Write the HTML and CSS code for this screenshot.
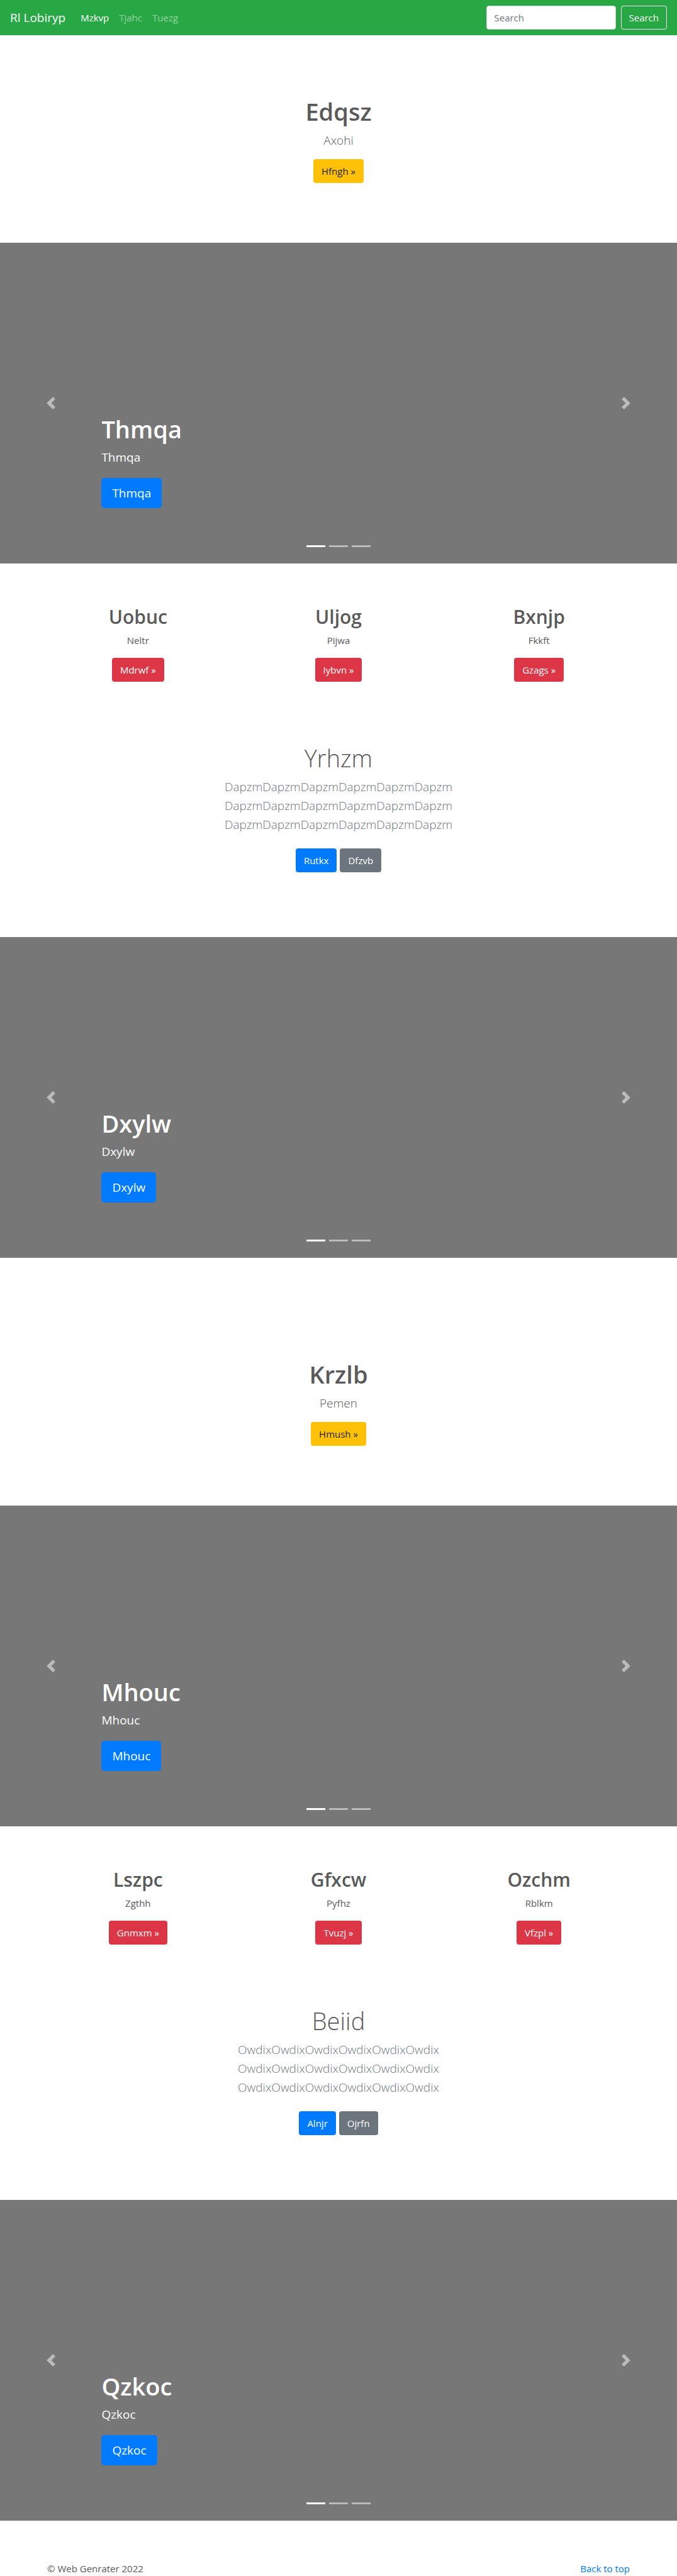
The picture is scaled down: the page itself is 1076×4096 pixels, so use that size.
FILE: index.html
```html
<!DOCTYPE html>
<html lang="en">
<head>
<meta charset="utf-8">
<meta name="viewport" content="width=device-width, initial-scale=1">
<title>Rl Lobiryp</title>
<link rel="stylesheet" href="styles.css">
</head>
<body>
<svg class="sprite" aria-hidden="true">
  <symbol id="chevron-left" viewBox="0 0 8 8"><path d="M5.25 0l-4 4 4 4 1.5-1.5L4.25 4l2.5-2.5L5.25 0z"/></symbol>
  <symbol id="chevron-right" viewBox="0 0 8 8"><path d="M2.75 0l-1.5 1.5L3.75 4l-2.5 2.5L2.75 8l4-4-4-4z"/></symbol>
</svg>

<header class="navbar" id="top">
  <a class="brand" href="#">Rl Lobiryp</a>
  <nav class="nav">
    <a class="nav-link active" href="#">Mzkvp</a>
    <a class="nav-link" href="#">Tjahc</a>
    <a class="nav-link" href="#">Tuezg</a>
  </nav>
  <form class="search">
    <input class="search-input" type="search" placeholder="Search" aria-label="Search">
    <button class="btn btn-outline" type="submit">Search</button>
  </form>
</header>

<main>
  <section class="hero">
    <h1 class="title">Edqsz</h1>
    <p class="lead">Axohi</p>
    <a class="btn btn-warning" href="#">Hfngh »</a>
  </section>

  <section class="carousel">
    <button class="control" type="button" aria-label="Previous"><svg class="chevron"><use href="#chevron-left"/></svg></button>
    <div class="caption">
      <h2 class="title">Thmqa</h2>
      <p class="caption-text">Thmqa</p>
      <a class="btn btn-primary btn-lg" href="#">Thmqa</a>
    </div>
    <button class="control" type="button" aria-label="Next"><svg class="chevron"><use href="#chevron-right"/></svg></button>
    <div class="indicators">
      <button class="indicator current" type="button" aria-label="Slide 1"></button>
      <button class="indicator" type="button" aria-label="Slide 2"></button>
      <button class="indicator" type="button" aria-label="Slide 3"></button>
    </div>
  </section>

  <section class="features">
    <div class="columns">
      <div class="column">
        <h2 class="subtitle">Uobuc</h2>
        <p class="text">Neltr</p>
        <a class="btn btn-danger" href="#">Mdrwf »</a>
      </div>
      <div class="column">
        <h2 class="subtitle">Uljog</h2>
        <p class="text">Pijwa</p>
        <a class="btn btn-danger" href="#">Iybvn »</a>
      </div>
      <div class="column">
        <h2 class="subtitle">Bxnjp</h2>
        <p class="text">Fkkft</p>
        <a class="btn btn-danger" href="#">Gzags »</a>
      </div>
    </div>
    <div class="intro">
      <h2 class="title title-light">Yrhzm</h2>
      <p class="lead lead-muted">DapzmDapzmDapzmDapzmDapzmDapzm<br>DapzmDapzmDapzmDapzmDapzmDapzm<br>DapzmDapzmDapzmDapzmDapzmDapzm</p>
      <div class="actions">
        <a class="btn btn-primary" href="#">Rutkx</a>
        <a class="btn btn-secondary" href="#">Dfzvb</a>
      </div>
    </div>
  </section>

  <section class="carousel">
    <button class="control" type="button" aria-label="Previous"><svg class="chevron"><use href="#chevron-left"/></svg></button>
    <div class="caption">
      <h2 class="title">Dxylw</h2>
      <p class="caption-text">Dxylw</p>
      <a class="btn btn-primary btn-lg" href="#">Dxylw</a>
    </div>
    <button class="control" type="button" aria-label="Next"><svg class="chevron"><use href="#chevron-right"/></svg></button>
    <div class="indicators">
      <button class="indicator current" type="button" aria-label="Slide 1"></button>
      <button class="indicator" type="button" aria-label="Slide 2"></button>
      <button class="indicator" type="button" aria-label="Slide 3"></button>
    </div>
  </section>

  <section class="hero hero-tall">
    <h1 class="title">Krzlb</h1>
    <p class="lead">Pemen</p>
    <a class="btn btn-warning" href="#">Hmush »</a>
  </section>

  <section class="carousel">
    <button class="control" type="button" aria-label="Previous"><svg class="chevron"><use href="#chevron-left"/></svg></button>
    <div class="caption">
      <h2 class="title">Mhouc</h2>
      <p class="caption-text">Mhouc</p>
      <a class="btn btn-primary btn-lg" href="#">Mhouc</a>
    </div>
    <button class="control" type="button" aria-label="Next"><svg class="chevron"><use href="#chevron-right"/></svg></button>
    <div class="indicators">
      <button class="indicator current" type="button" aria-label="Slide 1"></button>
      <button class="indicator" type="button" aria-label="Slide 2"></button>
      <button class="indicator" type="button" aria-label="Slide 3"></button>
    </div>
  </section>

  <section class="features">
    <div class="columns">
      <div class="column">
        <h2 class="subtitle">Lszpc</h2>
        <p class="text">Zgthh</p>
        <a class="btn btn-danger" href="#">Gnmxm »</a>
      </div>
      <div class="column">
        <h2 class="subtitle">Gfxcw</h2>
        <p class="text">Pyfhz</p>
        <a class="btn btn-danger" href="#">Tvuzj »</a>
      </div>
      <div class="column">
        <h2 class="subtitle">Ozchm</h2>
        <p class="text">Rblkm</p>
        <a class="btn btn-danger" href="#">Vfzpl »</a>
      </div>
    </div>
    <div class="intro">
      <h2 class="title title-light">Beiid</h2>
      <p class="lead lead-muted">OwdixOwdixOwdixOwdixOwdixOwdix<br>OwdixOwdixOwdixOwdixOwdixOwdix<br>OwdixOwdixOwdixOwdixOwdixOwdix</p>
      <div class="actions">
        <a class="btn btn-primary" href="#">Alnjr</a>
        <a class="btn btn-secondary" href="#">Ojrfn</a>
      </div>
    </div>
  </section>

  <section class="carousel">
    <button class="control" type="button" aria-label="Previous"><svg class="chevron"><use href="#chevron-left"/></svg></button>
    <div class="caption">
      <h2 class="title">Qzkoc</h2>
      <p class="caption-text">Qzkoc</p>
      <a class="btn btn-primary btn-lg" href="#">Qzkoc</a>
    </div>
    <button class="control" type="button" aria-label="Next"><svg class="chevron"><use href="#chevron-right"/></svg></button>
    <div class="indicators">
      <button class="indicator current" type="button" aria-label="Slide 1"></button>
      <button class="indicator" type="button" aria-label="Slide 2"></button>
      <button class="indicator" type="button" aria-label="Slide 3"></button>
    </div>
  </section>
</main>

<footer class="footer">
  <span>© Web Genrater 2022</span>
  <a class="top-link" href="#top">Back to top</a>
</footer>
</body>
</html>
```
FILE: styles.css
```css
*, *::before, *::after { box-sizing: border-box; }

body {
  margin: 0;
  background: #fff;
  color: #5a5a5a;
  font-family: "Open Sans", "Noto Sans", sans-serif;
  font-size: 15px;
  line-height: 24px;
}

h1, h2, p { margin: 0; }
a { color: inherit; text-decoration: none; }
button, input { font: inherit; }
.sprite { display: none; }

/* Top bar */
.navbar {
  display: flex;
  align-items: center;
  padding: 9px 16px;
  background: #28a745;
  color: #fff;
}
.brand { font-size: 19px; line-height: 30px; margin-right: 16px; }
.nav { display: flex; flex: 1; }
.nav-link { padding: 7px 8px; color: rgba(255, 255, 255, .5); }
.nav-link.active { color: #fff; }
.search { display: flex; gap: 8px; }
.search-input {
  width: 206px;
  height: 38px;
  padding: 6px 12px;
  border: 1px solid #ced4da;
  border-radius: 4px;
  background: #fff;
  color: #495057;
  appearance: none;
}
.search-input::placeholder { color: #6c757d; opacity: 1; }

/* Buttons */
.btn {
  display: inline-block;
  padding: 6px 12px;
  border: 1px solid transparent;
  border-radius: 4px;
  color: #fff;
  line-height: 24px;
  cursor: pointer;
}
.btn-lg { padding: 8px 16px; border-radius: 5px; font-size: 19px; line-height: 30px; }
.btn-outline { background: transparent; border-color: #f8f9fa; color: #f8f9fa; }
.btn-warning { background: #ffc107; color: #212529; }
.btn-primary { background: #007bff; }
.btn-secondary { background: #6c757d; }
.btn-danger { background: #dc3545; }

/* Type */
.title { margin-bottom: 5px; font-size: 38px; font-weight: 600; line-height: 52px; }
.title-light { font-weight: 300; }
.subtitle { margin-bottom: 4px; font-size: 30px; font-weight: 600; line-height: 42px; }
.lead { margin-bottom: 15px; font-size: 19px; font-weight: 300; line-height: 30px; }
.lead-muted { margin-bottom: 23px; color: #6c757d; }
.text { margin-bottom: 16px; }

/* Centred banner */
.hero {
  display: flex;
  flex-direction: column;
  align-items: center;
  padding: 95px 16px;
}
.hero-tall { padding-top: 159px; }

/* Carousel */
.carousel {
  position: relative;
  display: flex;
  min-height: 510px;
  background: #777;
  color: #fff;
}
.control {
  display: flex;
  flex: 0 0 15%;
  align-items: center;
  justify-content: center;
  padding: 0;
  border: 0;
  background: none;
  color: #fff;
  opacity: .5;
  cursor: pointer;
}
.chevron { width: 20px; height: 20px; fill: currentColor; }
.caption { flex: 1; align-self: flex-end; padding-bottom: 88px; }
.caption .btn { display: inline-flex; }
.caption-text { margin-bottom: 19px; font-size: 19px; line-height: 28px; }
.indicators {
  position: absolute;
  right: 0;
  bottom: 26px;
  left: 0;
  display: flex;
  justify-content: center;
  gap: 6px;
}
.indicator {
  width: 30px;
  height: 3px;
  padding: 0;
  border: 0;
  background: #fff;
  opacity: .5;
  cursor: pointer;
}
.indicator.current { opacity: 1; }

/* Three columns and the intro below */
.features { padding: 64px 0 103px; text-align: center; }
.columns {
  display: grid;
  grid-template-columns: repeat(3, 1fr);
  max-width: 956px;
  margin: 0 auto 95px;
}
.column, .intro { display: flex; flex-direction: column; align-items: center; }
.actions { display: flex; gap: 5px; }

/* Footer */
.footer {
  display: flex;
  justify-content: space-between;
  max-width: 956px;
  margin: 0 auto;
  padding: 64px 15px 0;
}
.top-link { color: #007bff; }
```
